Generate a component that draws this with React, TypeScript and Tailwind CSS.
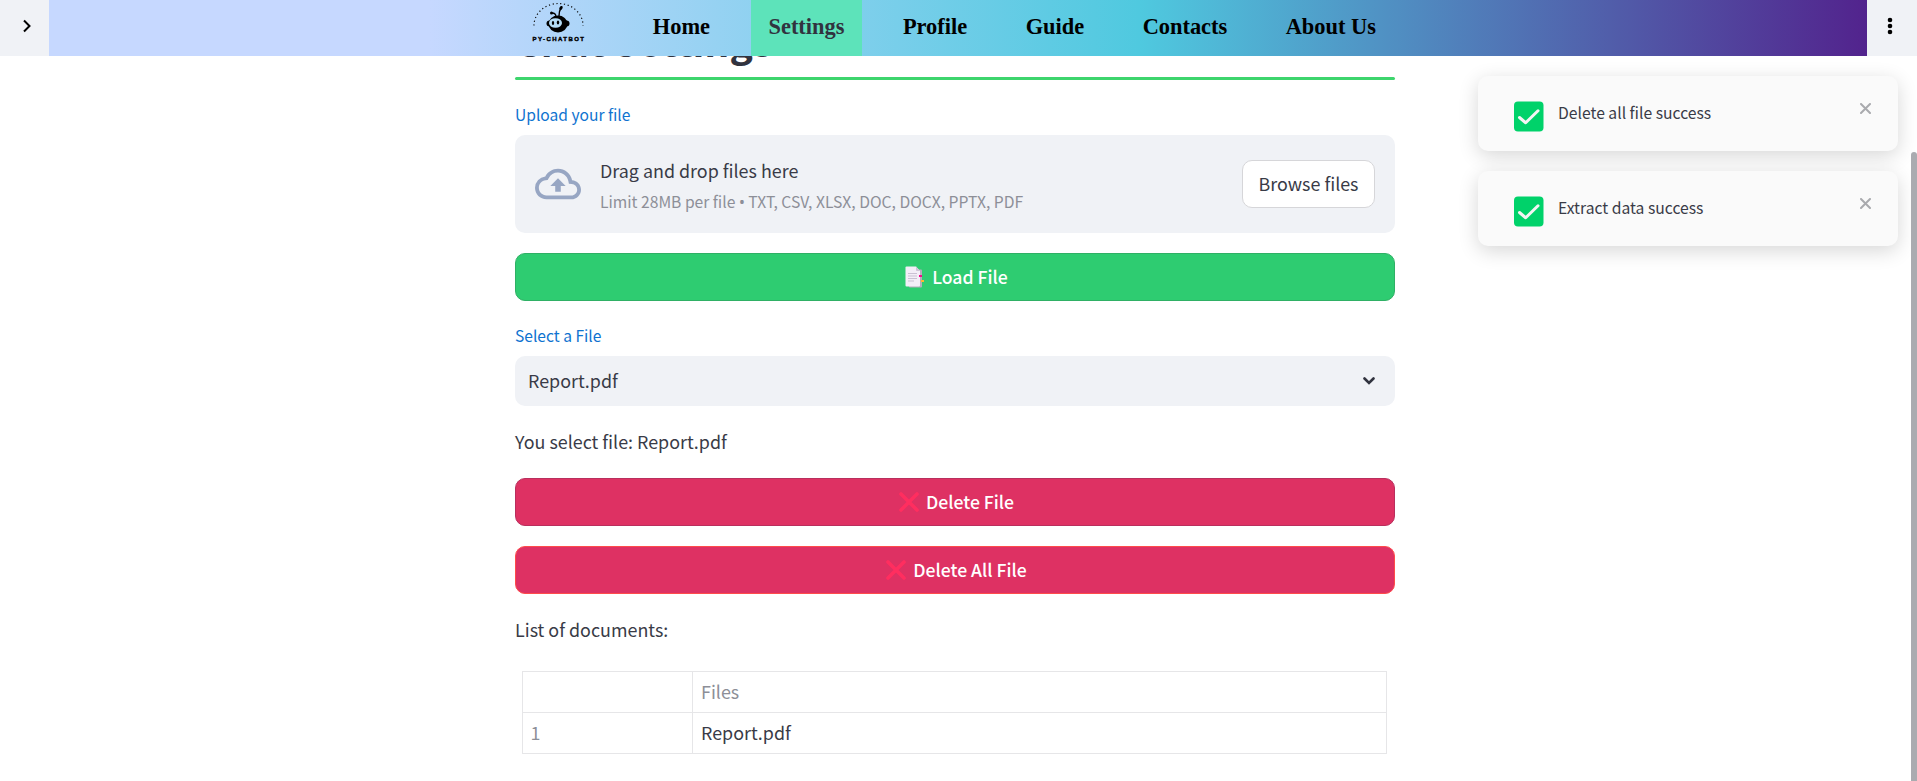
import React from "react";
import { MdOutlineBackup } from "react-icons/md";

const navItems = ["Home", "Settings", "Profile", "Guide", "Contacts", "About Us"];
const toasts = ["Delete all file success", "Extract data success"];

function Logo() {
  return (
    <svg width="54" height="42" viewBox="0 0 54 42" className="ml-px block">
      <path d="M2 25.500 A24.500 22 0 0 1 51 25.500" fill="none" stroke="#111" strokeWidth="1.2" strokeDasharray="1.2 2.600" />
      <path d="M24 17 Q24 13 20 13 M27 16 Q27 11 29 8" fill="none" stroke="#000" strokeWidth="1.4" />
      <circle cx="19.500" cy="13" r="1.500" />
      <ellipse cx="29" cy="8" rx="1.500" ry="2.200" transform="rotate(30 29 8)" />
      <ellipse cx="26" cy="24" rx="9.500" ry="8.500" />
      <rect x="14.500" y="20.500" width="23" height="6" rx="3" />
      <ellipse cx="23.500" cy="23" rx="6.500" ry="4.800" fill="#b4dcf6" />
      <ellipse cx="21" cy="23" rx="1.200" ry="2" />
      <ellipse cx="26" cy="22.500" rx="1.200" ry="2" />
      <text x="0.500" y="40.500" textLength="51.500" lengthAdjust="spacing" fontSize="6" fontWeight="900" stroke="#000" strokeWidth="0.4" fontFamily="Liberation Sans, sans-serif">
        PY-CHATBOT
      </text>
    </svg>
  );
}

function DocumentIcon() {
  return (
    <svg width="20" height="22" viewBox="0 0 20 22">
      <rect x="4" y="3.500" width="13" height="18" rx="1" fill="#b4acbc" />
      <path d="M1.500 .5H11L15 5V19.500Q15 20.500 14 20.500H1.500Q.5 20.500.5 19.500V1.500Q.5.5 1.500.5Z" fill="#f3eef8" />
      <path d="M11 .5V4Q11 5 12 5H15Z" fill="#cdc4d6" />
      <path d="M3 7.500H12M3 10H12M3 12.500H12M3 15H9" stroke="#c9c1d3" strokeWidth="1" />
      <rect x="14" y="9" width="3" height="2" fill="#f70a8d" />
      <rect x="16" y="14" width="3" height="2" fill="#fcb830" />
    </svg>
  );
}

function CrossIcon() {
  return (
    <svg width="20" height="20" viewBox="0 0 20 20">
      <path d="M2 2L18 18M18 2L2 18" stroke="#ff2e5f" strokeWidth="3.600" strokeLinecap="round" />
    </svg>
  );
}

function CheckIcon() {
  return (
    <svg width="30" height="31" viewBox="0 0 30 31" className="mt-[25px]">
      <rect x="0" y="0.500" width="29.500" height="30" rx="4" fill="#00d26a" />
      <path d="M5.500 16.500L11.700 21.800L24 9.800" fill="none" stroke="#f4f4f4" strokeWidth="3" strokeLinecap="round" strokeLinejoin="round" />
    </svg>
  );
}

function Header() {
  return (
    <header className="absolute inset-x-0 top-0 z-10 flex h-14 bg-[#f0f2f6]">
      <button className="flex w-[49px] items-center justify-center">
        <svg width="8" height="14" viewBox="0 0 8 14" className="-mt-1 ml-1">
          <path d="M1 1.500L6.500 7L1 12.500" fill="none" stroke="#000" strokeWidth="2" />
        </svg>
      </button>
      <nav className="flex flex-1 bg-[linear-gradient(90deg,#c6d8ff_381px,#4fc9df_1091px,#52238d_100%)] pl-[482px] font-['Liberation_Serif',serif] text-[22.4px] font-bold text-black">
        <div className="w-[103.8px]">
          <Logo />
        </div>
        <div className="flex gap-[22.5px]">
          {navItems.map((n) => (
            <a key={n} className={n === "Settings" ? "bg-[#5de3ba] px-[18px] pt-2.5 leading-[34px] text-[#31333f]" : "px-[18px] pt-2.5 leading-[34px]"}>
              {n}
            </a>
          ))}
        </div>
      </nav>
      <button className="flex w-[50px] items-center justify-center">
        <svg width="6" height="18" viewBox="0 0 6 18" className="-ml-[5px] -mt-1">
          <circle cx="3" cy="3" r="2.300" />
          <circle cx="3" cy="9" r="2.300" />
          <circle cx="3" cy="15" r="2.300" />
        </svg>
      </button>
    </header>
  );
}

function Toasts() {
  return (
    <div className="absolute right-[19px] top-[76px] z-20 flex w-[420px] flex-col gap-5">
      {toasts.map((t) => (
        <div key={t} className="flex h-[75px] rounded-[10px] bg-[#fafafa] pl-9 shadow-[0_5px_20px_rgba(0,0,0,0.16)]">
          <CheckIcon />
          <span className="ml-3.5 mt-6 flex-1 text-[15.7px] leading-[26px]">{t}</span>
          <svg width="11" height="11" viewBox="0 0 11 11" className="mr-[27px] mt-[27px]">
            <path d="M1 1L10 10M10 1L1 10" stroke="#a9aaae" strokeWidth="2" strokeLinecap="round" />
          </svg>
        </div>
      ))}
    </div>
  );
}

export default function App() {
  return (
    <div className="relative h-[781px] overflow-hidden bg-white font-['Noto_Sans_CJK_SC','Noto_Sans',sans-serif] text-[17.9px] leading-[30px] text-[#393b47]">
      <Header />
      <main className="ml-[515px] flex w-[880px] flex-col">
        <h1 className="h-[77px] pt-[15px] text-[39.2px] font-bold leading-[50px] text-[#31333f]">Chat Settings</h1>
        <div className="h-[3px] rounded-full bg-[#3dd56d]" />
        <label className="mt-[21px] h-[34px] text-[15.6px] leading-[26px] text-[#0f73d0]">Upload your file</label>
        <section className="flex h-[98px] items-center rounded-[10px] bg-[#f0f2f6] px-5">
          <MdOutlineBackup size={46} color="#97a6c3" />
          <div className="ml-[19px] flex-1 pt-1">
            <div className="leading-[31px]">Drag and drop files here</div>
            <div className="text-[15.66px] leading-[31px] text-[#8d8f98]">
              Limit 28MB per file <span className="font-['Noto_Sans']">•</span> TXT, CSV, XLSX, DOC, DOCX, PPTX, PDF
            </div>
          </div>
          <button className="h-12 w-[133px] rounded-[10px] border border-[#d6d6d9] bg-white pb-0.5">Browse files</button>
        </section>
        <button className="mt-5 flex h-12 items-center justify-center gap-[7px] rounded-[10px] border border-[#2fb065] bg-[#2ecc71] pl-[3px] text-[17.6px] font-medium text-white">
          <DocumentIcon />
          <span>Load File</span>
        </button>
        <label className="mt-[21px] h-[34px] text-[15.6px] leading-[26px] text-[#0f73d0]">Select a File</label>
        <div className="flex h-[50px] items-center justify-between rounded-[10px] bg-[#f0f2f6] pl-[13px] pr-5">
          <span className="pb-0.5">Report.pdf</span>
          <svg width="12" height="8" viewBox="0 0 12 8">
            <path d="M1.500 1.500L6 6L10.500 1.500" fill="none" stroke="#31333f" strokeWidth="2.600" strokeLinecap="round" />
          </svg>
        </div>
        <p className="mt-5 h-[52px]">You select file: Report.pdf</p>
        <button className="flex h-12 items-center justify-center gap-[7px] rounded-[10px] border border-[#b92f5d] bg-[#de3163] pl-[3px] text-[17.6px] font-medium text-white">
          <CrossIcon />
          <span>Delete File</span>
        </button>
        <button className="mt-5 flex h-12 items-center justify-center gap-[7px] rounded-[10px] border border-[#ff4b4b] bg-[#de3163] pl-[3px] text-[17.6px] font-medium text-white">
          <CrossIcon />
          <span>Delete All File</span>
        </button>
        <p className="mt-5 h-[57px]">List of documents:</p>
        <div className="ml-[7px] grid w-[865px] grid-cols-[170px_1fr] border-l border-t border-[#e6e6e8]">
          <div className="h-[41px] border-b border-r border-[#e6e6e8]" />
          <div className="border-b border-r border-[#e6e6e8] pl-2 leading-[39px] text-[#8d8f98]">Files</div>
          <div className="h-[41px] border-b border-r border-[#e6e6e8] pl-[7.5px] leading-[39px] text-[#8d8f98]">1</div>
          <div className="border-b border-r border-[#e6e6e8] pl-2 leading-[39px]">Report.pdf</div>
        </div>
      </main>
      <Toasts />
      <div className="absolute right-0 top-[152px] z-20 h-[640px] w-1.5 rounded-t-[3px] bg-[#aaabb0]" />
    </div>
  );
}
